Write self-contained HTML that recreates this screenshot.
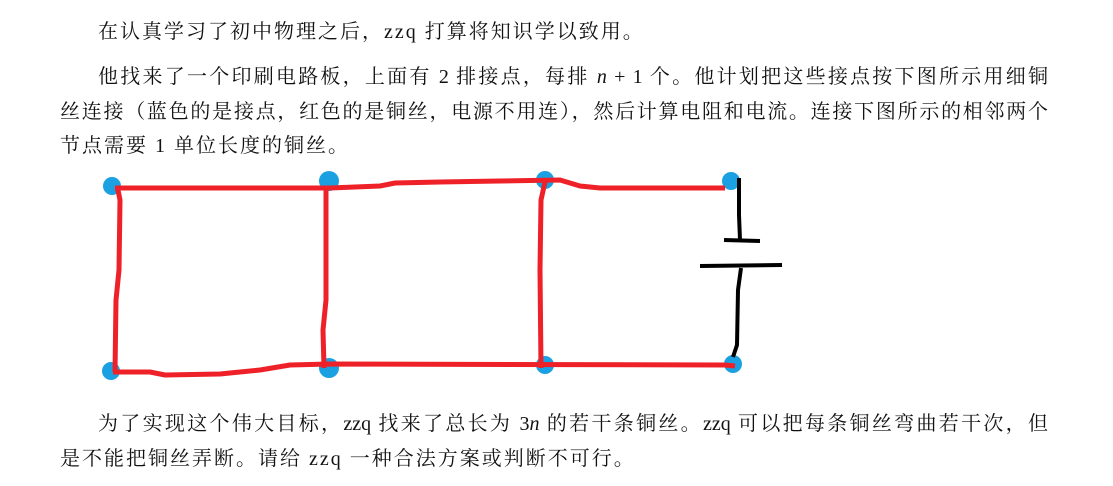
<!DOCTYPE html>
<html><head><meta charset="utf-8"><style>
body{margin:0;width:1113px;height:486px;background:#fff;position:relative;overflow:hidden;font-family:"Liberation Serif","Noto Serif CJK SC",serif;color:#111;}
.l{position:absolute;font-size:20px;line-height:24px;white-space:nowrap;letter-spacing:2px;}
.j{text-align:justify;text-align-last:justify;letter-spacing:0;white-space:normal;}
i{font-style:italic;}
</style></head><body>
<div class="l" style="left:98px;top:20px">在认真学习了初中物理之后，zzq 打算将知识学以致用。</div>
<div class="l j" style="left:98px;top:65px;width:950px">他找来了一个印刷电路板，上面有 2 排接点，每排 <i>n</i> + 1 个。他计划把这些接点按下图所示用细铜</div>
<div class="l j" style="left:60px;top:100px;width:988px">丝连接（蓝色的是接点，红色的是铜丝，电源不用连），然后计算电阻和电流。连接下图所示的相邻两个</div>
<div class="l" style="left:60px;top:134px">节点需要 1 单位长度的铜丝。</div>
<div class="l j" style="left:98px;top:412px;width:950px">为了实现这个伟大目标，zzq 找来了总长为 3<i>n</i> 的若干条铜丝。zzq 可以把每条铜丝弯曲若干次，但</div>
<div class="l" style="left:60px;top:447px">是不能把铜丝弄断。请给 zzq 一种合法方案或判断不可行。</div>
<svg style="position:absolute;left:0;top:0" width="1113" height="486">
<g fill="#1ba1e2">
<circle cx="112" cy="186" r="9"/><circle cx="329" cy="181" r="10"/><circle cx="545" cy="180" r="9"/><circle cx="731" cy="181" r="9"/>
<circle cx="111" cy="371" r="9"/><circle cx="329" cy="368" r="10"/><circle cx="545" cy="365" r="9"/><circle cx="733" cy="364" r="9"/>
</g>
<g stroke="#ee2128" stroke-width="5" fill="none" stroke-linejoin="round">
<path d="M115 188 L330 188 L380 186 L395 183 L440 182 L500 181 L560 180 L580 186 L600 188 L725 188"/>
<path d="M113 372 L150 372 L165 375 L220 374 L260 370 L290 365 L330 364 L725 365 L735 366"/>
<path d="M118 190 L120 200 L119 270 L116 300 L115 372"/>
<path d="M326 188 L326 300 L323 330 L324 368"/>
<path d="M545 182 L541 200 L540 270 L541 368"/>
</g>
<g stroke="#000" stroke-width="4" fill="none">
<path d="M739 178 L739 215 L740 240"/>
<path d="M724 240 L760 241"/>
<path d="M700 266 L782 265"/>
<path d="M741 268 L738 290 L737 345 L733 357"/>
</g>
</svg>
</body></html>
